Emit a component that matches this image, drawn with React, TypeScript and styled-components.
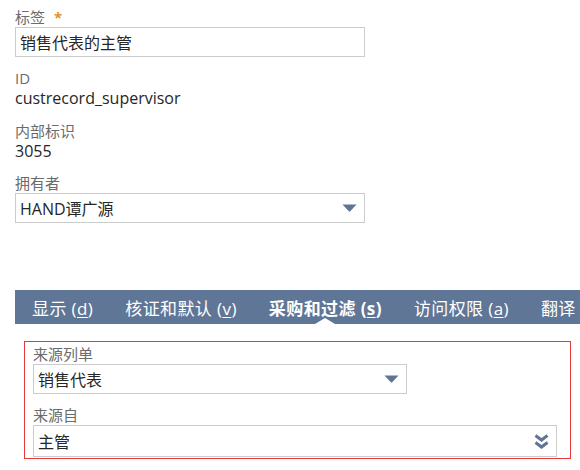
import styled, { createGlobalStyle } from 'styled-components'

const GlobalStyle = createGlobalStyle`
  body {
    margin: 0;
    background: #fff;
    font-family: "Open Sans", "Noto Sans CJK SC", sans-serif;
    color: #262626;
  }
`

const Page = styled.div`
  width: 580px;
  height: 470px;
  overflow: hidden;
  padding-top: 8px;
  box-sizing: border-box;
`

const Main = styled.div`
  padding-left: 15px;
  width: 350px;
`

const Field = styled.div<{ $gap?: number }>`
  margin-bottom: ${(p) => p.$gap ?? 12}px;
`

const Label = styled.div`
  font-size: 15px;
  line-height: 18px;
  color: #6b6b6b;
  margin-bottom: 1px;
`

const Required = styled.span`
  color: #e0912a;
  font-weight: bold;
  margin-left: 9px;
`

const Value = styled.div`
  font-size: 16px;
  line-height: 20px;
`

const Box = styled.div<{ $width: number; $height?: number }>`
  width: ${(p) => p.$width}px;
  height: ${(p) => p.$height ?? 30}px;
  box-sizing: border-box;
  border: 1px solid #cccccc;
  display: flex;
  align-items: center;
  justify-content: space-between;
  padding: 0 7px 0 4px;
  font-size: 16px;
  background: #fff;
`

const TabBar = styled.div`
  margin: 67px 0 0 15px;
  height: 34px;
  background: #5f7696;
  display: flex;
  white-space: nowrap;
  overflow: hidden;
`

const Tab = styled.div<{ $active?: boolean }>`
  position: relative;
  flex-shrink: 0;
  height: 34px;
  box-sizing: border-box;
  padding: 4px 16px 0;
  line-height: 30px;
  font-size: 17px;
  letter-spacing: 0.4px;
  color: #fff;
  font-weight: ${(p) => (p.$active ? 700 : 400)};
  &:first-child {
    padding-left: 17px;
  }
  u {
    text-decoration-thickness: 1px;
    text-underline-offset: 2px;
  }
  ${(p) =>
    p.$active &&
    `
    &::after {
      content: '';
      position: absolute;
      left: 50%;
      bottom: 0;
      margin-left: -10px;
      border-left: 10px solid transparent;
      border-right: 10px solid transparent;
      border-bottom: 6px solid #fff;
    }
  `}
`

const Highlight = styled.div`
  margin: 17px 0 0 24px;
  width: 547px;
  height: 118px;
  box-sizing: border-box;
  border: 1px solid #e53935;
  padding: 3px 13px 0 8px;
`

const Arrow = () => (
  <svg width="15" height="8" viewBox="0 0 15 8">
    <path d="M0.5 0.5 H14.5 L8.2 7.2 Q7.5 7.8 6.8 7.2 Z" fill="#5f7596" />
  </svg>
)

const DoubleChevron = () => (
  <svg width="15" height="15" viewBox="0 0 15 15">
    <path
      d="M1.5 1.5 L7.5 6 L13.5 1.5 M1.5 8.5 L7.5 13 L13.5 8.5"
      fill="none"
      stroke="#5f7596"
      strokeWidth="3"
      strokeLinejoin="miter"
    />
  </svg>
)

export default function App() {
  return (
    <Page>
      <GlobalStyle />
      <Main>
        <Field>
          <Label>
            标签<Required>*</Required>
          </Label>
          <Box $width={350}>销售代表的主管</Box>
        </Field>
        <Field $gap={14}>
          <Label>ID</Label>
          <Value>custrecord_supervisor</Value>
        </Field>
        <Field $gap={13}>
          <Label>内部标识</Label>
          <Value>3055</Value>
        </Field>
        <Field $gap={0}>
          <Label>拥有者</Label>
          <Box $width={350}>
            HAND谭广源
            <Arrow />
          </Box>
        </Field>
      </Main>
      <TabBar>
        <Tab>
          显示 (<u>d</u>)
        </Tab>
        <Tab>
          核证和默认 (<u>v</u>)
        </Tab>
        <Tab $active>
          采购和过滤 (<u>s</u>)
        </Tab>
        <Tab>
          访问权限 (<u>a</u>)
        </Tab>
        <Tab>翻译</Tab>
      </TabBar>
      <Highlight>
        <Field>
          <Label>来源列单</Label>
          <Box $width={374}>
            销售代表
            <Arrow />
          </Box>
        </Field>
        <Field $gap={0}>
          <Label>来源自</Label>
          <Box $width={524} $height={32}>
            主管
            <DoubleChevron />
          </Box>
        </Field>
      </Highlight>
    </Page>
  )
}
